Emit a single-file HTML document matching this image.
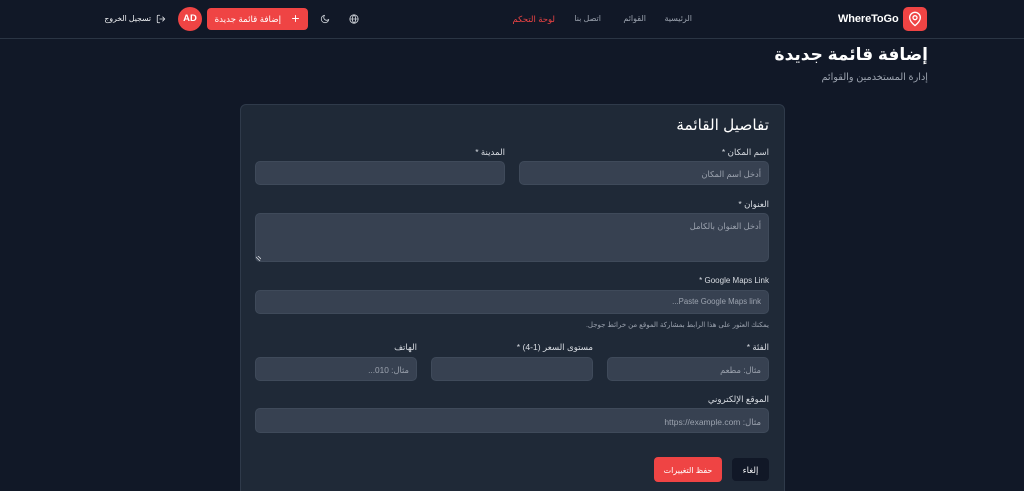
<!DOCTYPE html>
<html lang="ar" dir="rtl"><head><meta charset="utf-8"><title>إضافة قائمة جديدة</title>
<style>
html,body{margin:0;padding:0;width:1024px;height:491px;overflow:hidden;background:#111827}
body{position:relative;font-family:"Liberation Sans","DejaVu Sans",sans-serif;color:#e5e7eb}
.a{position:absolute;white-space:nowrap}
.t{position:absolute;white-space:nowrap;direction:rtl;line-height:16px;text-align:right}
.f{position:absolute;background:#374151;border:1px solid #3f4a5a;border-radius:5px;box-sizing:border-box}
.l{font-size:8.600px;color:#d9dde3}
.p{font-size:8.300px;color:#9ca3af;margin-top:1px}
svg{position:absolute;fill:none;stroke-linecap:round;stroke-linejoin:round}
</style></head><body>
<div class="a" style="left:0;top:0;width:1024px;height:39px;background:#111827;border-bottom:1px solid #2b3544;box-sizing:border-box"></div>

<div class="a" style="left:903px;top:7px;width:24px;height:24px;background:#ef4444;border-radius:5px"></div>
<svg style="left:907px;top:11px" width="16" height="16" viewBox="0 0 24 24" stroke="#fff" stroke-width="2"><path d="M20 10c0 5-5.500 10-8 12-2.500-2-8-7-8-12a8 8 0 0 1 16 0z"/><circle cx="12" cy="10" r="3"/></svg>
<div class="a" style="left:838px;top:10px;font:bold 11px/18px 'Liberation Sans',sans-serif;letter-spacing:-.1px;color:#fff;direction:ltr">WhereToGo</div>

<div class="t" style="right:332px;top:11px;font-size:8px;color:#9ca3af">الرئيسية</div>
<div class="t" style="right:378px;top:11px;font-size:8px;color:#9ca3af">القوائم</div>
<div class="t" style="right:423px;top:11px;font-size:8px;color:#9ca3af">اتصل بنا</div>
<div class="t" style="right:469px;top:11px;font-size:8.500px;color:#ef4444">لوحة التحكم</div>

<svg style="left:349px;top:14px" width="10" height="10" viewBox="0 0 24 24" stroke="#d1d5db" stroke-width="2"><circle cx="12" cy="12" r="10"/><path d="M2 12h20M12 2c3 3 4 6 4 10s-1 7-4 10c-3-3-4-6-4-10s1-7 4-10z"/></svg>
<svg style="left:320px;top:14px" width="10" height="10" viewBox="0 0 24 24" stroke="#d1d5db" stroke-width="2"><path d="M21 13A9 9 0 1 1 11 3a7 7 0 0 0 10 10z"/></svg>

<div class="a" style="left:207px;top:8px;width:101px;height:22px;background:#ef4444;border-radius:4px"></div>
<svg style="left:291px;top:14px" width="9" height="9" viewBox="0 0 24 24" stroke="#fff" stroke-width="2.500"><path d="M12 4v16M4 12h16"/></svg>
<div class="t" style="right:743px;top:11px;font-size:8.700px;color:#fff">إضافة قائمة جديدة</div>

<div class="a" style="left:178px;top:7px;width:24px;height:24px;background:#ef4444;border-radius:50%;font:bold 9.500px/24px 'Liberation Sans',sans-serif;color:#fff;text-align:center;direction:ltr">AD</div>

<svg style="left:156px;top:14px" width="10" height="10" viewBox="0 0 24 24" stroke="#e5e7eb" stroke-width="2"><path d="M9 3H5a2 2 0 0 0-2 2v14a2 2 0 0 0 2 2h4M16 17l5-5-5-5M21 12H9"/></svg>
<div class="t" style="right:873px;top:11px;font-size:7.700px;color:#f3f4f6">تسجيل الخروج</div>

<div class="t" style="right:96px;top:43px;font-size:17px;line-height:24px;font-weight:bold;color:#fff">إضافة قائمة جديدة</div>
<div class="t" style="right:96px;top:70px;font-size:9.700px;color:#9ca3af">إدارة المستخدمين والقوائم</div>

<div class="a" style="left:240px;top:104px;width:545px;height:400px;background:#1f2937;border:1px solid #2f3a4a;border-radius:6px;box-sizing:border-box"></div>
<div class="t" style="right:255px;top:116px;font-size:15.300px;line-height:20px;color:#fff">تفاصيل القائمة</div>

<div class="t l" style="right:255px;top:144px">اسم المكان *</div>
<div class="f" style="left:519px;top:161px;width:250px;height:24px"></div>
<div class="t p" style="right:263px;top:165px">أدخل اسم المكان</div>
<div class="t l" style="right:519px;top:144px">المدينة *</div>
<div class="f" style="left:255px;top:161px;width:250px;height:24px"></div>

<div class="t l" style="right:255px;top:196px">العنوان *</div>
<div class="f" style="left:255px;top:213px;width:514px;height:49px"></div>
<div class="t p" style="right:263px;top:217px">أدخل العنوان بالكامل</div>
<svg style="left:256px;top:256px" width="5" height="5" viewBox="0 0 5 5" stroke="#d1d5db" stroke-width=".8"><path d="M0 1l4 4M2 0l3 3"/></svg>

<div class="a" style="right:255px;top:273px;font:8px/16px 'Liberation Sans',sans-serif;color:#d9dde3;direction:ltr">* Google Maps Link</div>
<div class="f" style="left:255px;top:290px;width:514px;height:24px"></div>
<div class="a" style="right:263px;top:294px;font:7.800px/16px 'Liberation Sans',sans-serif;color:#9ca3af;direction:ltr">...Paste Google Maps link</div>
<div class="t" style="right:255px;top:318px;font-size:7px;color:#9ca3af">يمكنك العثور على هذا الرابط بمشاركة الموقع من خرائط جوجل.</div>

<div class="t l" style="right:255px;top:339px">الفئة *</div>
<div class="f" style="left:607px;top:357px;width:162px;height:24px"></div>
<div class="t p" style="right:263px;top:361px">مثال: مطعم</div>
<div class="t l" style="right:431px;top:339px">مستوى السعر (1-4) *</div>
<div class="f" style="left:431px;top:357px;width:162px;height:24px"></div>
<div class="t l" style="right:607px;top:339px">الهاتف</div>
<div class="f" style="left:255px;top:357px;width:162px;height:24px"></div>
<div class="t p" style="right:615px;top:361px">مثال: 010...</div>

<div class="t l" style="right:255px;top:391px">الموقع الإلكتروني</div>
<div class="f" style="left:255px;top:408px;width:514px;height:25px"></div>
<div class="t p" style="right:263px;top:413px;font-size:8.500px">مثال: https://example.com</div>

<div class="a" style="left:732px;top:458px;width:37px;height:23px;background:#111827;border-radius:4px;font-size:8.500px;line-height:25px;text-align:center;color:#f3f4f6">إلغاء</div>
<div class="a" style="left:654px;top:457px;width:68px;height:25px;background:#ef4444;border-radius:4px;font-size:8px;line-height:28px;text-align:center;color:#fff">حفظ التغييرات</div>
</body></html>
